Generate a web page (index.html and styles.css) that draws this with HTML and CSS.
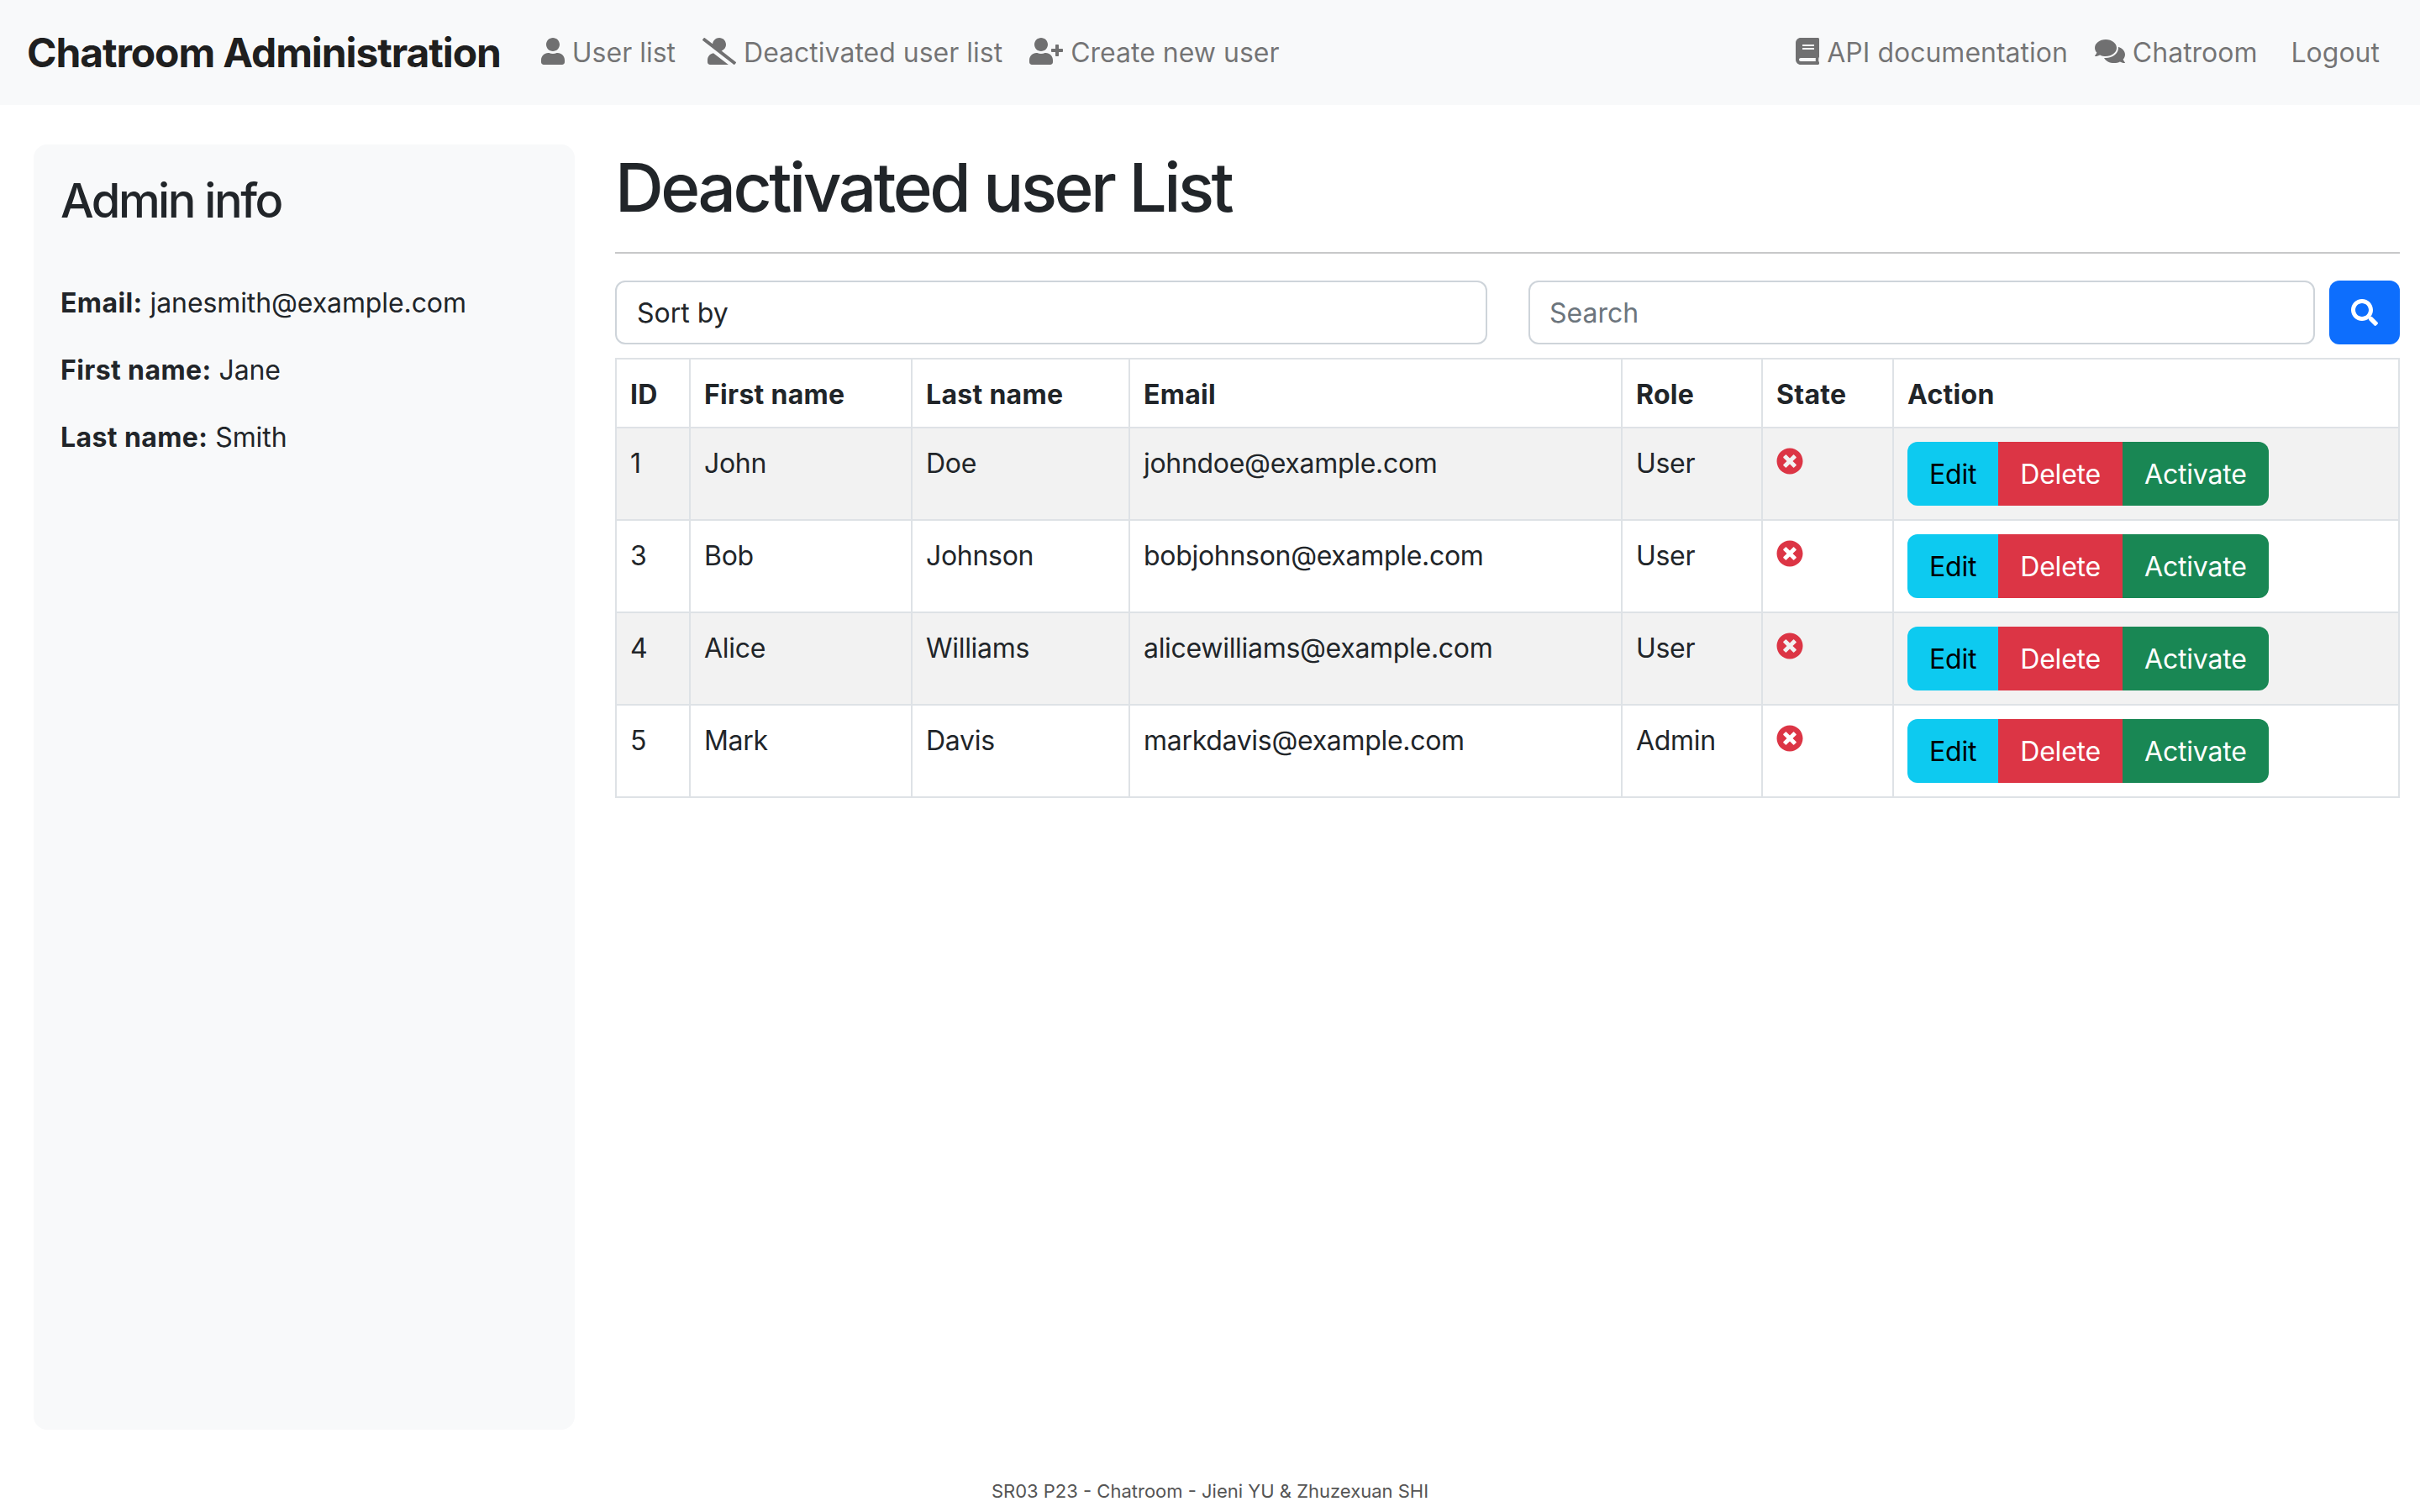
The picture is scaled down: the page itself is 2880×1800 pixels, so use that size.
FILE: index.html
```html
<!DOCTYPE html>
<html lang="en">
<head>
  <meta charset="UTF-8" />
  <title>Chatroom Administration</title>
  <link rel="stylesheet" href="styles.css">
</head>
<body>
  <svg class="sprite" aria-hidden="true">
    <symbol id="i-user" viewBox="0 0 448 512"><path d="M224 256c70.7 0 128-57.3 128-128S294.7 0 224 0 96 57.3 96 128s57.3 128 128 128zm89.6 32h-16.7c-22.2 10.2-46.9 16-72.9 16s-50.6-5.8-72.9-16h-16.7C60.2 288 0 348.2 0 422.4V464c0 26.5 21.5 48 48 48h352c26.5 0 48-21.5 48-48v-41.6c0-74.2-60.2-134.4-134.4-134.4z"/></symbol>
    <symbol id="i-user-slash" viewBox="0 0 640 512"><path d="M633.8 458.1L362.3 248.3C412.1 230.7 448 183.8 448 128 448 57.3 390.7 0 320 0c-67.1 0-121.5 51.8-126.9 117.4L45.5 3.4C38.5-2 28.5-.8 23 6.2L3.4 31.4c-5.4 7-4.2 17 2.8 22.4l588.4 454.7c7 5.4 17 4.2 22.5-2.8l19.6-25.3c5.4-6.8 4.1-16.9-2.9-22.3zM96 422.4V464c0 26.5 21.5 48 48 48h350.2L207.4 290.3C144.2 301.3 96 356 96 422.4z"/></symbol>
    <symbol id="i-user-plus" viewBox="0 0 640 512"><path d="M624 208h-64v-64c0-8.8-7.2-16-16-16h-32c-8.8 0-16 7.2-16 16v64h-64c-8.8 0-16 7.2-16 16v32c0 8.8 7.2 16 16 16h64v64c0 8.8 7.2 16 16 16h32c8.8 0 16-7.2 16-16v-64h64c8.8 0 16-7.2 16-16v-32c0-8.8-7.2-16-16-16zm-400 48c70.7 0 128-57.3 128-128S294.7 0 224 0 96 57.3 96 128s57.3 128 128 128zm89.6 32h-16.7c-22.2 10.2-46.9 16-72.9 16s-50.6-5.8-72.9-16h-16.7C60.2 288 0 348.2 0 422.4V464c0 26.5 21.5 48 48 48h352c26.5 0 48-21.5 48-48v-41.6c0-74.2-60.2-134.4-134.4-134.4z"/></symbol>
    <symbol id="i-book" viewBox="0 0 448 512"><path d="M448 360V24c0-13.3-10.7-24-24-24H96C43 0 0 43 0 96v320c0 53 43 96 96 96h328c13.3 0 24-10.7 24-24v-16c0-7.5-3.5-14.3-8.9-18.7-4.2-15.4-4.2-59.3 0-74.7 5.4-4.3 8.9-11.1 8.9-18.6zM128 134c0-3.3 2.7-6 6-6h212c3.3 0 6 2.7 6 6v20c0 3.3-2.7 6-6 6H134c-3.3 0-6-2.7-6-6v-20zm0 64c0-3.3 2.7-6 6-6h212c3.3 0 6 2.7 6 6v20c0 3.3-2.7 6-6 6H134c-3.3 0-6-2.7-6-6v-20zm253.4 250H96c-17.7 0-32-14.3-32-32 0-17.6 14.4-32 32-32h285.4c-1.9 17.1-1.9 46.9 0 64z"/></symbol>
    <symbol id="i-comments" viewBox="0 0 576 512"><path d="M416 192c0-88.4-93.1-160-208-160S0 103.6 0 192c0 34.3 14.1 65.9 38 92-13.4 30.2-35.5 54.2-35.8 54.5-2.2 2.3-2.8 5.7-1.5 8.7S4.8 352 8 352c36.6 0 66.9-12.3 88.7-25 32.2 15.7 70.3 25 111.3 25 114.9 0 208-71.6 208-160zm122 220c23.9-26 38-57.7 38-92 0-66.9-53.5-124.2-129.3-148.1.9 6.6 1.3 13.3 1.3 20.1 0 105.9-107.7 192-240 192-10.8 0-21.3-.8-31.7-1.9C207.8 439.6 281.8 480 368 480c41 0 79.1-9.2 111.3-25 21.8 12.7 52.1 25 88.7 25 3.2 0 6.1-1.9 7.3-4.8 1.3-2.9.7-6.3-1.5-8.7-.3-.3-22.4-24.2-35.8-54.5z"/></symbol>
    <symbol id="i-search" viewBox="0 0 512 512"><path d="M505 442.7L405.3 343c-4.5-4.5-10.6-7-17-7H372c27.6-35.3 44-79.7 44-128C416 93.1 322.9 0 208 0S0 93.1 0 208s93.1 208 208 208c48.3 0 92.7-16.4 128-44v16.3c0 6.4 2.5 12.5 7 17l99.7 99.7c9.4 9.4 24.6 9.4 33.9 0l28.3-28.3c9.4-9.4 9.4-24.6.1-34zM208 336c-70.7 0-128-57.2-128-128 0-70.7 57.2-128 128-128 70.7 0 128 57.2 128 128 0 70.7-57.2 128-128 128z"/></symbol>
    <symbol id="i-times" viewBox="0 0 512 512"><path d="M256 8C119 8 8 119 8 256s111 248 248 248 248-111 248-248S393 8 256 8zm121.6 313.1c4.7 4.7 4.7 12.3 0 17L338 377.6c-4.7 4.7-12.3 4.7-17 0L256 312l-65.1 65.6c-4.7 4.7-12.3 4.7-17 0L134.4 338c-4.7-4.7-4.7-12.3 0-17l65.6-65-65.6-65.1c-4.7-4.7-4.7-12.3 0-17l39.6-39.6c4.7-4.7 12.3-4.7 17 0l65 65.7 65.1-65.6c4.7-4.7 12.3-4.7 17 0l39.6 39.6c4.7 4.7 4.7 12.3 0 17L312 256l65.6 65.1z"/></symbol>
  </svg>

  <nav class="navbar">
    <a class="brand" href="#">Chatroom Administration</a>
    <div class="nav-links">
      <a href="#"><svg class="icon w-user"><use href="#i-user"/></svg> User list</a>
      <a href="#"><svg class="icon w-wide"><use href="#i-user-slash"/></svg> Deactivated user list</a>
      <a href="#"><svg class="icon w-wide"><use href="#i-user-plus"/></svg> Create new user</a>
    </div>
    <div class="nav-links nav-right">
      <a href="#"><svg class="icon w-user"><use href="#i-book"/></svg> API documentation</a>
      <a href="#"><svg class="icon w-comments"><use href="#i-comments"/></svg> Chatroom</a>
      <a class="logout" href="#">Logout</a>
    </div>
  </nav>

  <div class="page">
    <aside class="sidebar">
      <h3>Admin info</h3>
      <p><b>Email:</b> janesmith@example.com</p>
      <p><b>First name:</b> Jane</p>
      <p><b>Last name:</b> Smith</p>
    </aside>

    <main class="content">
      <h1>Deactivated user List</h1>
      <hr>
      <div class="filters">
        <select class="sort-select">
          <option>Sort by</option>
        </select>
        <input class="search-input" type="text" placeholder="Search">
        <button class="search-btn"><svg class="icon"><use href="#i-search"/></svg></button>
      </div>

      <table class="user-table">
        <colgroup>
          <col class="c-id"><col class="c-first"><col class="c-last"><col class="c-email"><col class="c-role"><col class="c-state"><col>
        </colgroup>
        <thead>
          <tr><th>ID</th><th>First name</th><th>Last name</th><th>Email</th><th>Role</th><th>State</th><th>Action</th></tr>
        </thead>
        <tbody>
          <tr>
            <td>1</td><td>John</td><td>Doe</td><td>johndoe@example.com</td><td>User</td>
            <td><svg class="state-icon"><use href="#i-times"/></svg></td>
            <td class="actions"><div class="btn-group"><button class="btn btn-edit">Edit</button><button class="btn btn-delete">Delete</button><button class="btn btn-activate">Activate</button></div></td>
          </tr>
          <tr>
            <td>3</td><td>Bob</td><td>Johnson</td><td>bobjohnson@example.com</td><td>User</td>
            <td><svg class="state-icon"><use href="#i-times"/></svg></td>
            <td class="actions"><div class="btn-group"><button class="btn btn-edit">Edit</button><button class="btn btn-delete">Delete</button><button class="btn btn-activate">Activate</button></div></td>
          </tr>
          <tr>
            <td>4</td><td>Alice</td><td>Williams</td><td>alicewilliams@example.com</td><td>User</td>
            <td><svg class="state-icon"><use href="#i-times"/></svg></td>
            <td class="actions"><div class="btn-group"><button class="btn btn-edit">Edit</button><button class="btn btn-delete">Delete</button><button class="btn btn-activate">Activate</button></div></td>
          </tr>
          <tr>
            <td>5</td><td>Mark</td><td>Davis</td><td>markdavis@example.com</td><td>Admin</td>
            <td><svg class="state-icon"><use href="#i-times"/></svg></td>
            <td class="actions"><div class="btn-group"><button class="btn btn-edit">Edit</button><button class="btn btn-delete">Delete</button><button class="btn btn-activate">Activate</button></div></td>
          </tr>
        </tbody>
      </table>
    </main>
  </div>

  <footer class="footer">SR03 P23 - Chatroom - Jieni YU &amp; Zhuzexuan SHI</footer>
</body>
</html>
```

FILE: styles.css
```css
* { box-sizing: border-box; }
body {
  margin: 0;
  height: 1800px;
  display: flex;
  flex-direction: column;
  font-family: Inter, "Liberation Sans", sans-serif;
  font-size: 32px;
  line-height: 48px;
  color: #212529;
  background: #fff;
  overflow: hidden;
}
a { text-decoration: none; }
.sprite { display: none; }
.icon { width: 32px; height: 32px; fill: currentColor; vertical-align: -3px; }
.w-user { width: 28px; }
.w-wide { width: 40px; }
.w-comments { width: 36px; }

.navbar {
  height: 125px;
  flex: none;
  display: flex;
  align-items: center;
  padding: 0 32px;
  background: #f8f9fa;
}
.brand {
  margin-right: 32px;
  font-size: 48px;
  font-weight: 700;
  letter-spacing: -1.1px;
  color: rgba(0, 0, 0, .9);
}
.nav-links { display: flex; }
.nav-links a { padding: 0 16px; color: rgba(0, 0, 0, .55); }
.nav-right { margin-left: auto; }
.nav-links .logout { margin-left: 8px; }

.page {
  flex: 1;
  display: flex;
  min-height: 0;
  padding: 47px 24px 0 40px;
  gap: 48px;
}
.sidebar {
  width: 644px;
  height: 1530px;
  flex: none;
  padding: 34px 32px 32px;
  background: #f8f9fa;
  border-radius: 16px;
}
.sidebar h3 { margin: 0 0 64px; font-size: 56px; line-height: 67px; font-weight: 500; letter-spacing: -2.5px; }
.sidebar p { margin: 0 0 32px; letter-spacing: -0.1px; }
.sidebar b { font-weight: 700; letter-spacing: 0.4px; }

.content { flex: 1; min-width: 0; }
.content h1 { margin: 3px 0 0; font-size: 80px; line-height: 96px; font-weight: 500; letter-spacing: -3.45px; }
.content hr { margin: 29px 0 32px; height: 2px; border: 0; background: #c7c8c9; }

.filters { display: flex; height: 76px; margin-bottom: 16px; }
.sort-select, .search-input {
  height: 76px;
  padding: 2px 24px 0;
  font: inherit;
  color: #212529;
  background: #fff;
  border: 2px solid #ced4da;
  border-radius: 12px;
  appearance: none;
}
.sort-select { width: 1038px; margin-right: 49px; }
.search-input { flex: 1; margin-right: 17px; padding-top: 0; padding-left: 23px; }
.search-input::placeholder { color: #6c757d; opacity: 1; }
.search-btn {
  width: 84px;
  height: 76px;
  padding: 0;
  border: 0;
  border-radius: 12px;
  color: #fff;
  background: #0d6efd;
}

.user-table { width: 100%; table-layout: fixed; border-collapse: collapse; }
.user-table th, .user-table td {
  padding: 18px 16px 14px;
  border: 2px solid #dee2e6;
  text-align: left;
  vertical-align: top;
  letter-spacing: -0.3px;
}
.user-table th { font-weight: 700; letter-spacing: 0.3px; }
.user-table .actions { padding: 16px; }
.user-table tbody tr:nth-child(odd) td { background: #f2f2f2; }
.c-id { width: 88px; }
.c-first { width: 264px; }
.c-last { width: 259px; }
.c-email { width: 586px; }
.c-role { width: 167px; }
.c-state { width: 156px; }

.state-icon { width: 32px; height: 32px; fill: #dc3545; vertical-align: -2px; }
.btn-group { display: inline-flex; vertical-align: top; }
.btn {
  height: 76px;
  padding: 2px 26px 0;
  font: inherit;
  letter-spacing: -0.2px;
  border: 0;
}
.btn-edit { color: #000; background: #0dcaf0; border-radius: 12px 0 0 12px; }
.btn-delete { color: #fff; background: #dc3545; }
.btn-activate { color: #fff; background: #198754; border-radius: 0 12px 12px 0; }

.footer {
  height: 60px;
  flex: none;
  margin-top: auto;
  padding-top: 5px;
  text-align: center;
  font-size: 22px;
  line-height: 60px;
  color: #555;
}
```
